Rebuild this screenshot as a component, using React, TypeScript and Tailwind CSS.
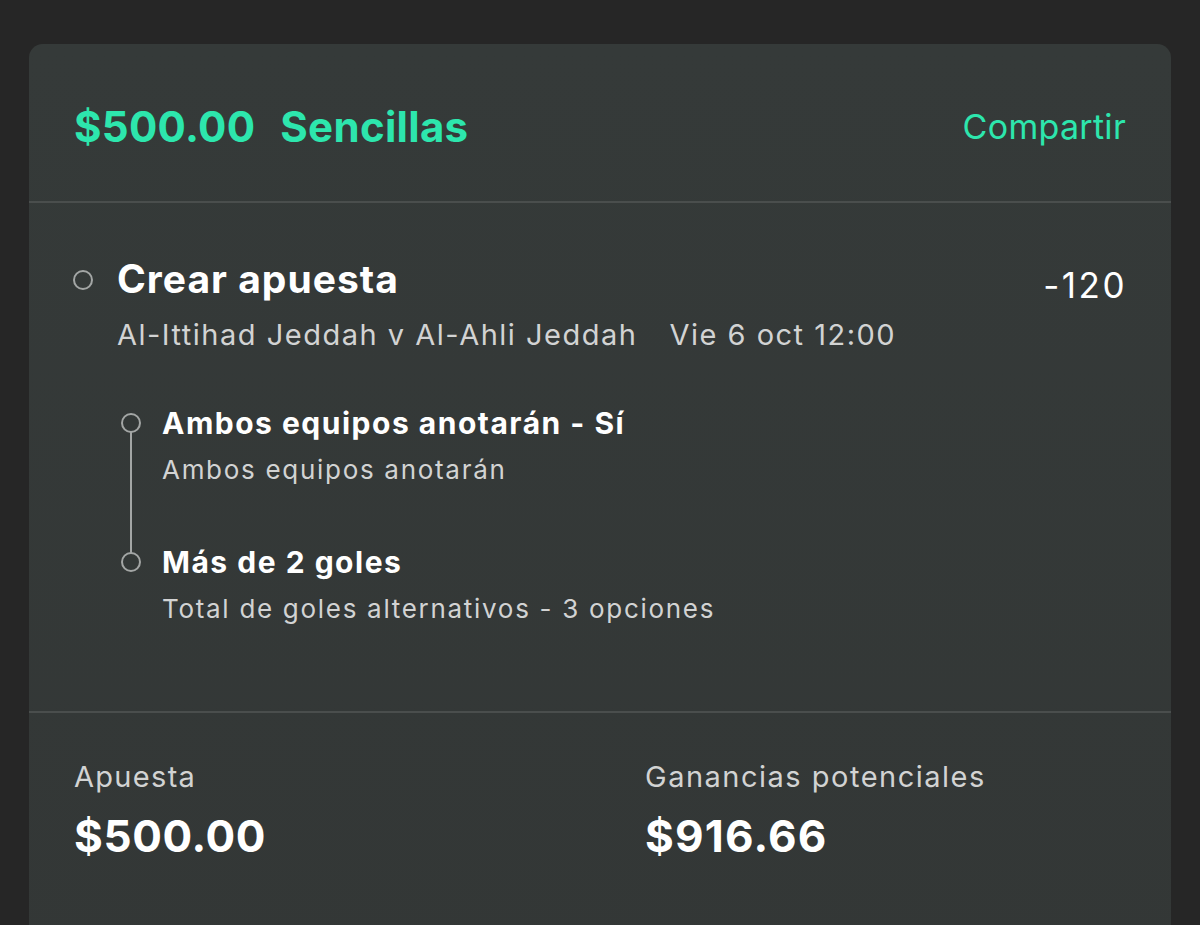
import React from "react";

const Leg = ({ title, subtitle }: { title: string; subtitle: string }) => (
  <div className="flex items-start gap-[21px]">
    <div className="relative z-10 mt-[11px] h-[20px] w-[20px] shrink-0 rounded-full border-[2.5px] border-[#a3a6a5] bg-[#333837]" />
    <div>
      <div className="text-[30px] font-bold leading-[42px] tracking-[1.5px] text-white">{title}</div>
      <div className="mt-[6px] text-[26px] leading-[40px] tracking-[1.7px] text-[#d2d3d3]">{subtitle}</div>
    </div>
  </div>
);

export default function App() {
  return (
    <div
      className="h-[925px] w-[1200px] overflow-hidden bg-[#262626] px-[29px] pt-[44px]"
      style={{ fontFamily: "Inter, 'Noto Sans', sans-serif" }}
    >
      <div className="rounded-t-[14px] bg-gradient-to-b from-[#353a39] to-[#333736]">
        {/* header */}
        <div className="flex h-[159px] items-center justify-between border-b-[2px] border-[#4a4e4d] px-[45px] pt-[8px]">
          <div className="flex gap-[25px] text-[42px] font-bold tracking-[0.3px] text-[#2de6ad]">
            <span>$500.00</span>
            <span>Sencillas</span>
          </div>
          <div className="text-[34px] tracking-[0.3px] text-[#2de6ad]">Compartir</div>
        </div>

        {/* selection */}
        <div className="h-[510px] border-b-[2px] border-[#4a4e4d] px-[44px] pt-[49px]">
          <div className="flex items-start justify-between">
            <div className="flex items-start gap-[24px]">
              <div className="mt-[18px] h-[20px] w-[20px] shrink-0 rounded-full border-[2.5px] border-[#a3a6a5]" />
              <div>
                <div className="text-[39px] font-bold leading-[54px] tracking-[1px] text-white">Crear apuesta</div>
                <div className="mt-[9px] flex gap-[32px] text-[29px] leading-[40px] tracking-[1.5px] text-[#d2d3d3]">
                  <span>Al-Ittihad Jeddah v Al-Ahli Jeddah</span>
                  <span>Vie 6 oct 12:00</span>
                </div>
              </div>
            </div>
            <div className="mt-[7px] text-[35px] tracking-[2.5px] text-white">-120</div>
          </div>

          <div className="relative ml-[48px] mt-[47px] flex flex-col gap-[51px]">
            <div className="absolute left-[9px] top-[30px] h-[130px] w-[2px] bg-[#a3a6a5]" />
            <Leg title="Ambos equipos anotarán - Sí" subtitle="Ambos equipos anotarán" />
            <Leg title="Más de 2 goles" subtitle="Total de goles alternativos - 3 opciones" />
          </div>
        </div>

        {/* totals */}
        <div className="grid h-[300px] grid-cols-2 gap-[90px] px-[45px] pt-[44px]">
          <div>
            <div className="text-[29px] leading-[40px] tracking-[1.3px] text-[#d2d3d3]">Apuesta</div>
            <div className="mt-[11px] text-[44px] font-bold leading-[56px] tracking-[0.6px] text-white">$500.00</div>
          </div>
          <div>
            <div className="text-[29px] leading-[40px] tracking-[1.5px] text-[#d2d3d3]">Ganancias potenciales</div>
            <div className="mt-[11px] text-[44px] font-bold leading-[56px] tracking-[1.2px] text-white">$916.66</div>
          </div>
        </div>
      </div>
    </div>
  );
}
